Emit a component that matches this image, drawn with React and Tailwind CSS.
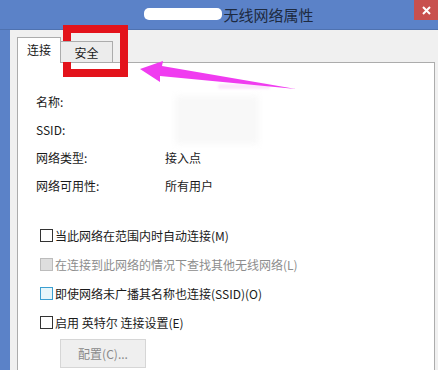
import React from "react";

const font = { fontFamily: '"Noto Sans CJK SC", "Noto Sans", sans-serif' };

function Box({ variant }) {
  if (variant === "disabled")
    return <span className="w-[13px] h-[13px] border border-[#bcbcbc] bg-[#dedede] shrink-0" />;
  if (variant === "focus")
    return <span className="w-[13px] h-[13px] border border-[#3c9fd1] bg-[#e6f6fb] shrink-0" />;
  return <span className="w-[13px] h-[13px] border border-[#333333] bg-white shrink-0" />;
}

export default function App() {
  const rows = [
    ["名称:", ""],
    ["SSID:", ""],
    ["网络类型:", "接入点"],
    ["网络可用性:", "所有用户"],
  ];
  const checks = [
    ["当此网络在范围内时自动连接(M)", "normal", "text-[#1a1a1a]"],
    ["在连接到此网络的情况下查找其他无线网络(L)", "disabled", "text-[#8d8d8d]"],
    ["即使网络未广播其名称也连接(SSID)(O)", "focus", "text-[#1a1a1a]"],
    ["启用 英特尔 连接设置(E)", "normal", "text-[#1a1a1a]"],
  ];
  return (
    <div className="relative w-[438px] h-[387px] bg-white overflow-hidden" style={font}>
      <div className="flex flex-col h-[370px]">
        {/* title bar */}
        <div className="relative h-[30px] bg-[#5b82c8] border-b border-[#4f72b0] flex items-center justify-center shrink-0">
          <div className="flex items-center ml-[20px] -mt-[1px]">
            <span className="w-[78px] h-[12px] bg-white rounded-[5px] blur-[0.6px] mr-[1px]" />
            <span className="text-[15px] leading-none text-[#1d2a40]">无线网络属性</span>
          </div>
          <div className="absolute right-0 top-0 w-[24px] h-[20px] bg-[#c8504e] flex items-center justify-center">
            <svg width="9" height="9" viewBox="0 0 9 9">
              <path d="M1 1 L8 8 M8 1 L1 8" stroke="white" strokeWidth="2" />
            </svg>
          </div>
        </div>
        {/* body */}
        <div className="flex flex-1 min-h-0">
          <div className="w-[10px] bg-[#5b82c8] shrink-0" />
          <div className="flex-1 bg-[#f0f0f0] pl-[7px] pr-[3px] flex flex-col">
            {/* tabs */}
            <div className="flex items-end h-[33px] pt-[8px] -mb-px relative z-10">
              <div className="w-[44px] h-[26px] bg-white border border-b-0 border-[#acacac] flex items-start justify-center pt-[4px] text-[12px] leading-[16px] text-[#1a1a1a]">
                连接
              </div>
              <div className="w-[52px] h-[21px] mb-px bg-[#ececec] border border-b-0 border-l-0 border-[#acacac] flex items-start justify-center pt-[3px] text-[12px] leading-[16px] text-[#1a1a1a]">
                安全
              </div>
            </div>
            {/* panel */}
            <div className="flex-1 bg-white border border-b-0 border-[#acacac] pl-[18px] pt-[25px] flex flex-col">
              <div className="relative flex flex-col">
                <div className="absolute left-[139px] top-[8px] w-[84px] h-[48px] bg-[#f8f8f8] blur-[3px]" />
                <div className="absolute left-[182px] top-[-4px] w-[52px] h-[5px] bg-[#fbe6fb] blur-[1px] rounded-full" />
                {rows.map(([k, v]) => (
                  <div key={k} className="relative h-[28px] flex items-center text-[12px] text-[#1a1a1a]">
                    <span className="w-[129px]">{k}</span>
                    <span>{v}</span>
                  </div>
                ))}
              </div>
              <div className="flex flex-col mt-[21px] pl-[4px]">
                {checks.map(([t, v, c]) => (
                  <div key={t} className="h-[29px] flex items-center gap-[2px]">
                    <Box variant={v} />
                    <span className={`text-[12px] ${c}`}>{t}</span>
                  </div>
                ))}
                <div className="ml-[20px] mt-[2px] w-[86px] h-[29px] bg-[#efefef] border border-[#d6d6d6] flex items-center justify-center text-[12px] text-[#8a8a8a]">
                  配置(C)...
                </div>
              </div>
            </div>
          </div>
        </div>
      </div>
      {/* annotations */}
      <div className="absolute left-[63px] top-[25px] w-[65px] h-[52px] border-[8px] border-[#e3131b]" />
      <svg className="absolute left-0 top-0" width="438" height="387">
        <polygon points="140,69 163,61 162,66 296,89 160,76 160,82" fill="#f03cf0" />
      </svg>
    </div>
  );
}
